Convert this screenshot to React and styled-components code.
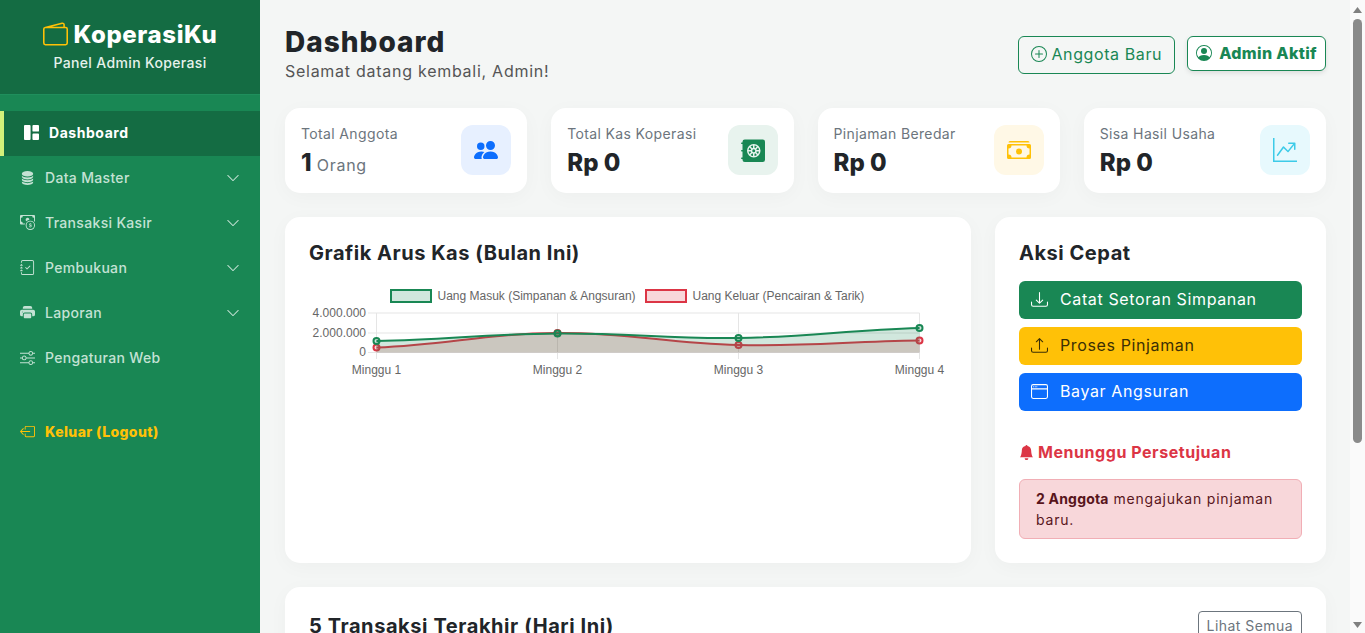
import React from 'react';
import styled, { createGlobalStyle } from 'styled-components';
import {
  BsWallet2,
  BsGrid1X2Fill,
  BsDatabaseFill,
  BsCashCoin,
  BsJournalCheck,
  BsPrinterFill,
  BsSliders,
  BsBoxArrowLeft,
  BsChevronDown,
  BsPlusCircle,
  BsPersonCircle,
  BsPeopleFill,
  BsSafe2Fill,
  BsCashStack,
  BsGraphUpArrow,
  BsDownload,
  BsUpload,
  BsWindow,
  BsBellFill,
} from 'react-icons/bs';

const GlobalStyle = createGlobalStyle`
  html, body {
    margin: 0;
    height: 100%;
    overflow: hidden;
  }
  body {
    background: #f4f6f5;
    font-family: Inter, 'Open Sans', sans-serif;
    color: #212529;
  }
  * {
    box-sizing: border-box;
  }
`;

const Shell = styled.div`
  display: flex;
  height: 633px;
  overflow: hidden;
`;

const Sidebar = styled.aside`
  width: 260px;
  flex-shrink: 0;
  background: #198754;
`;

const Brand = styled.div`
  height: 95px;
  background: #146c43;
  border-bottom: 1px solid #1f8f5c;
  padding-top: 20px;
  text-align: center;
  color: #fff;
  margin-bottom: 16px;
`;

const BrandName = styled.div`
  display: flex;
  align-items: center;
  justify-content: center;
  gap: 6px;
  font-size: 24px;
  line-height: 29px;
  font-weight: 800;
  letter-spacing: 0.6px;
  svg {
    color: #ffc107;
    font-size: 25px;
  }
`;

const BrandSub = styled.div`
  font-size: 14px;
  line-height: 20px;
  margin-top: 4px;
  font-weight: 500;
  letter-spacing: 0.35px;
  color: #e6f2ec;
`;

const NavItem = styled.div`
  display: flex;
  align-items: center;
  height: 45px;
  padding: 0 20px 2px;
  gap: 10px;
  font-size: 14px;
  letter-spacing: ${({ $active }) => ($active ? '0.55px' : '0.32px')};
  font-weight: ${({ $active }) => ($active ? 700 : 500)};
  color: ${({ $active }) => ($active ? '#fff' : '#c4e2d4')};
  background: ${({ $active }) => ($active ? '#146c43' : 'transparent')};
  border-left: ${({ $active }) => ($active ? '4px solid #d2f07a' : 'none')};
  svg {
    font-size: 15px;
    flex-shrink: 0;
  }
`;

const Caret = styled(BsChevronDown)`
  margin-left: auto;
  font-size: 14px !important;
`;

const LogoutItem = styled(NavItem)`
  margin-top: 29px;
  font-weight: 800;
  letter-spacing: 0.4px;
  color: #ffc107;
`;

const Main = styled.main`
  flex: 1;
  min-width: 0;
  padding: 24px 24px 0 25px;
`;

const TopBar = styled.header`
  display: flex;
  justify-content: space-between;
  align-items: flex-start;
  height: 60px;
  margin-bottom: 24px;
`;

const PageTitle = styled.h1`
  margin: 0;
  font-size: 28px;
  line-height: 36px;
  font-weight: 800;
  letter-spacing: 1px;
`;

const PageSub = styled.div`
  font-size: 16px;
  line-height: 22px;
  letter-spacing: 0.73px;
  color: #555;
`;

const TopActions = styled.div`
  display: flex;
  gap: 12px;
  align-items: flex-start;
  padding-top: 12px;
`;

const OutlineButton = styled.div`
  display: flex;
  align-items: center;
  gap: 4px;
  height: 38px;
  padding: 0 12px 2px;
  border: 1px solid #198754;
  border-radius: 6px;
  color: #198754;
  font-size: 16px;
  letter-spacing: 0.6px;
  svg {
    font-size: 16px;
  }
`;

const ProfileBadge = styled(OutlineButton)`
  height: 35px;
  padding: 0 8px 2px;
  gap: 7px;
  background: #fff;
  font-weight: 800;
  letter-spacing: 0.35px;
  box-shadow: 0 2px 5px rgba(0, 0, 0, 0.1);
`;

const StatGrid = styled.section`
  display: grid;
  grid-template-columns: repeat(4, 1fr);
  gap: 24px;
  margin-bottom: 24px;
`;

const Card = styled.div`
  background: #fff;
  border-radius: 15px;
  box-shadow: 0 4px 20px rgba(0, 0, 0, 0.03);
`;

const StatCard = styled(Card)`
  height: 85px;
  padding: 0 16px;
  display: flex;
  align-items: center;
  justify-content: space-between;
`;

const StatText = styled.div`
  padding-top: 2px;
`;

const StatLabel = styled.div`
  font-size: 14px;
  line-height: 20px;
  letter-spacing: 0.36px;
  color: #6c757d;
`;

const StatValue = styled.div`
  margin-top: 2px;
  height: 34px;
  font-size: 24px;
  line-height: 34px;
  font-weight: 800;
  small {
    font-size: 16px;
    font-weight: 400;
    letter-spacing: 0.7px;
    color: #6c757d;
  }
`;

const StatIcon = styled.div`
  width: 50px;
  height: 50px;
  margin-bottom: 1px;
  border-radius: 12px;
  display: flex;
  align-items: center;
  justify-content: center;
  font-size: 24px;
  color: ${({ $color }) => $color};
  background: ${({ $bg }) => $bg};
`;

const MidRow = styled.section`
  display: grid;
  grid-template-columns: 686px 331px;
  gap: 24px;
  margin-bottom: 24px;
`;

const PanelCard = styled(Card)`
  padding: 24px;
`;

const PanelTitle = styled.h2`
  margin: 0 0 16px;
  font-size: 20px;
  line-height: 24px;
  font-weight: 700;
  letter-spacing: 0.53px;
`;

const ChartWrap = styled.div`
  margin-top: 20px;
`;

const ActionList = styled.div`
  display: flex;
  flex-direction: column;
  gap: 8px;
`;

const ActionButton = styled.div`
  display: flex;
  align-items: center;
  gap: 12px;
  height: 38px;
  padding: 0 12px 2px;
  border-radius: 6px;
  font-size: 16px;
  letter-spacing: 0.62px;
  background: ${({ $bg }) => $bg};
  color: ${({ $fg }) => $fg};
  svg {
    font-size: 17px;
  }
`;

const PendingTitle = styled.h3`
  display: flex;
  align-items: center;
  gap: 4px;
  margin: 29px 0 15px;
  font-size: 16px;
  line-height: 24px;
  font-weight: 700;
  letter-spacing: 0.55px;
  color: #dc3545;
  svg {
    font-size: 15px;
  }
`;

const Alert = styled.div`
  padding: 8px 16px;
  font-size: 14px;
  line-height: 21px;
  letter-spacing: 0.8px;
  background: #f8d7da;
  border: 1px solid #f1aeb5;
  border-radius: 6px;
  color: #58151c;
  b {
    letter-spacing: 0.2px;
  }
`;

const BottomCard = styled(PanelCard)`
  height: 120px;
`;

const BottomHead = styled.div`
  display: flex;
  justify-content: space-between;
  align-items: flex-start;
`;

const BottomTitle = styled(PanelTitle)`
  padding-top: 3px;
  letter-spacing: 0.58px;
`;

const GhostButton = styled.div`
  font-size: 14px;
  line-height: 21px;
  letter-spacing: 0.45px;
  padding: 3px 8px;
  border: 1px solid #6c757d;
  border-radius: 4px;
  color: #6c757d;
`;

const ScrollRail = styled.div`
  width: 15px;
  flex-shrink: 0;
  background: #fafafa;
  display: flex;
  flex-direction: column;
  align-items: center;
`;

const ScrollArrow = styled.div`
  height: ${({ $height }) => $height}px;
  display: flex;
  align-items: center;
  justify-content: center;
  svg {
    display: block;
  }
`;

const ScrollThumb = styled.div`
  width: 9px;
  height: 424px;
  margin-top: -1px;
  border-radius: 5px;
  background: #8b8b8b;
`;

const ScrollSpace = styled.div`
  flex: 1;
`;

const navItems = [
  { label: 'Data Master', icon: BsDatabaseFill, caret: true },
  { label: 'Transaksi Kasir', icon: BsCashCoin, caret: true },
  { label: 'Pembukuan', icon: BsJournalCheck, caret: true },
  { label: 'Laporan', icon: BsPrinterFill, caret: true },
  { label: 'Pengaturan Web', icon: BsSliders },
];

const stats = [
  { label: 'Total Anggota', value: '1', unit: 'Orang', icon: BsPeopleFill, color: '#0d6efd', bg: '#e7f0ff' },
  { label: 'Total Kas Koperasi', value: 'Rp 0', icon: BsSafe2Fill, color: '#198754', bg: '#e8f3ee' },
  { label: 'Pinjaman Beredar', value: 'Rp 0', icon: BsCashStack, color: '#ffc107', bg: '#fff8e6' },
  { label: 'Sisa Hasil Usaha', value: 'Rp 0', icon: BsGraphUpArrow, color: '#3dcbe8', bg: '#e7f9fd' },
];

// chart geometry, in px inside the svg
const xs = [67.5, 248.5, 429.5, 610.5];
const inY = [56, 48.5, 53, 43];
const outY = [62.5, 48, 60, 55.5];
const BASE_Y = 67.5;

const smooth = (ys) => {
  let d = `M${xs[0]} ${ys[0]}`;
  for (let i = 1; i < xs.length; i++) {
    const dx = (xs[i] - xs[i - 1]) * 0.4;
    const prev = ys[Math.max(i - 2, 0)];
    const next = ys[Math.min(i + 1, ys.length - 1)];
    const c1 = ys[i - 1] + (ys[i] - prev) * 0.2;
    const c2 = ys[i] - (next - ys[i - 1]) * 0.2;
    d += ` C${xs[i - 1] + dx} ${c1} ${xs[i] - dx} ${c2} ${xs[i]} ${ys[i]}`;
  }
  return d;
};

const area = (ys) => `${smooth(ys)} L${xs[3]} ${BASE_Y} L${xs[0]} ${BASE_Y} Z`;

const axisFont = { fontFamily: '"Liberation Sans", Arial, sans-serif', fontSize: 12, fill: '#666' };

const GREEN_FILL = 'rgba(25,135,84,0.2)';
const RED_FILL = 'rgba(220,53,69,0.2)';

const Series = ({ ys, fill, stroke }) => (
  <>
    <path d={area(ys)} fill={fill} />
    <path d={smooth(ys)} fill="none" stroke={stroke} strokeWidth="2" />
    {xs.map((x, i) => (
      <circle key={x} cx={x} cy={ys[i]} r="3" fill={fill} stroke={stroke} strokeWidth="2" />
    ))}
  </>
);

const CashChart = () => (
  <svg width="638" height="100" viewBox="0 0 638 100" style={{ display: 'block' }}>
    <rect x="82" y="5" width="40" height="12" fill={GREEN_FILL} stroke="#198754" strokeWidth="2" />
    <text x="128.5" y="15" {...axisFont}>Uang Masuk (Simpanan &amp; Angsuran)</text>
    <rect x="337" y="5" width="40" height="12" fill={RED_FILL} stroke="#dc3545" strokeWidth="2" />
    <text x="383.5" y="15" {...axisFont}>Uang Keluar (Pencairan &amp; Tarik)</text>
    {xs.map((x) => (
      <line key={x} x1={x} y1="28" x2={x} y2="74" stroke="#e5e5e5" />
    ))}
    {[28, 48, 67.5].map((y) => (
      <line key={y} x1="59" y1={y} x2={xs[3]} y2={y} stroke="#e5e5e5" />
    ))}
    <text x="57" y="32" textAnchor="end" {...axisFont}>4.000.000</text>
    <text x="57" y="52" textAnchor="end" {...axisFont}>2.000.000</text>
    <text x="57" y="71" textAnchor="end" {...axisFont}>0</text>
    {xs.map((x, i) => (
      <text key={x} x={x} y="89" textAnchor="middle" {...axisFont}>{`Minggu ${i + 1}`}</text>
    ))}
    <Series ys={outY} fill={RED_FILL} stroke="#dc3545" />
    <Series ys={inY} fill={GREEN_FILL} stroke="#198754" />
  </svg>
);

const App = () => (
  <>
    <GlobalStyle />
    <Shell>
      <Sidebar>
        <Brand>
          <BrandName>
            <BsWallet2 />
            KoperasiKu
          </BrandName>
          <BrandSub>Panel Admin Koperasi</BrandSub>
        </Brand>
        <NavItem $active>
          <BsGrid1X2Fill />
          Dashboard
        </NavItem>
        {navItems.map(({ label, icon: Icon, caret }) => (
          <NavItem key={label}>
            <Icon />
            {label}
            {caret && <Caret />}
          </NavItem>
        ))}
        <LogoutItem>
          <BsBoxArrowLeft />
          Keluar (Logout)
        </LogoutItem>
      </Sidebar>
      <Main>
        <TopBar>
          <div>
            <PageTitle>Dashboard</PageTitle>
            <PageSub>Selamat datang kembali, Admin!</PageSub>
          </div>
          <TopActions>
            <OutlineButton>
              <BsPlusCircle />
              Anggota Baru
            </OutlineButton>
            <ProfileBadge>
              <BsPersonCircle />
              Admin Aktif
            </ProfileBadge>
          </TopActions>
        </TopBar>
        <StatGrid>
          {stats.map(({ label, value, unit, icon: Icon, color, bg }) => (
            <StatCard key={label}>
              <StatText>
                <StatLabel>{label}</StatLabel>
                <StatValue>
                  {value} {unit && <small>{unit}</small>}
                </StatValue>
              </StatText>
              <StatIcon $color={color} $bg={bg}>
                <Icon />
              </StatIcon>
            </StatCard>
          ))}
        </StatGrid>
        <MidRow>
          <PanelCard>
            <PanelTitle>Grafik Arus Kas (Bulan Ini)</PanelTitle>
            <ChartWrap>
              <CashChart />
            </ChartWrap>
          </PanelCard>
          <PanelCard>
            <PanelTitle>Aksi Cepat</PanelTitle>
            <ActionList>
              <ActionButton $bg="#198754" $fg="#fff">
                <BsDownload />
                Catat Setoran Simpanan
              </ActionButton>
              <ActionButton $bg="#ffc107" $fg="#3b2f05">
                <BsUpload />
                Proses Pinjaman
              </ActionButton>
              <ActionButton $bg="#0d6efd" $fg="#fff">
                <BsWindow />
                Bayar Angsuran
              </ActionButton>
            </ActionList>
            <PendingTitle>
              <BsBellFill />
              Menunggu Persetujuan
            </PendingTitle>
            <Alert>
              <b>2 Anggota</b> mengajukan pinjaman baru.
            </Alert>
          </PanelCard>
        </MidRow>
        <BottomCard>
          <BottomHead>
            <BottomTitle>5 Transaksi Terakhir (Hari Ini)</BottomTitle>
            <GhostButton>Lihat Semua</GhostButton>
          </BottomHead>
        </BottomCard>
      </Main>
      <ScrollRail>
        <ScrollArrow $height={20}>
          <svg width="9" height="6" viewBox="0 0 9 6"><path d="M4.5 0 9 6H0z" fill="#808080" /></svg>
        </ScrollArrow>
        <ScrollThumb />
        <ScrollSpace />
        <ScrollArrow $height={17}>
          <svg width="9" height="6" viewBox="0 0 9 6"><path d="M0 0h9L4.5 6z" fill="#808080" /></svg>
        </ScrollArrow>
      </ScrollRail>
    </Shell>
  </>
);

export default App;
